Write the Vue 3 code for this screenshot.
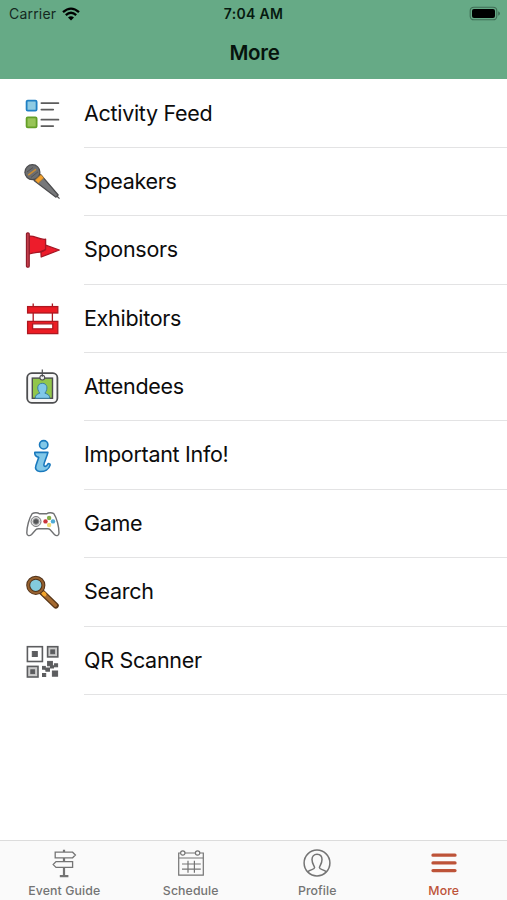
<script setup>
import { ref } from 'vue'

const items = [
  { id: 'feed', label: 'Activity Feed' },
  { id: 'speakers', label: 'Speakers' },
  { id: 'sponsors', label: 'Sponsors' },
  { id: 'exhibitors', label: 'Exhibitors' },
  { id: 'attendees', label: 'Attendees' },
  { id: 'info', label: 'Important Info!' },
  { id: 'game', label: 'Game' },
  { id: 'search', label: 'Search' },
  { id: 'qr', label: 'QR Scanner' }
]

const tabs = [
  { id: 'guide', label: 'Event Guide' },
  { id: 'schedule', label: 'Schedule' },
  { id: 'profile', label: 'Profile' },
  { id: 'more', label: 'More' }
]

const activeTab = ref('more')
</script>

<template>
  <div class="screen">
    <header class="header">
      <div class="status">
        <div class="carrier">
          <span>Carrier</span>
          <svg class="wifi" width="18" height="14" viewBox="0 0 18 14">
            <path d="M1 5.2 Q9-2 17 5.2" />
            <path d="M3.8 8.2 Q9 3.4 14.2 8.2" />
            <path class="dot" d="M6 10.6 Q9 8 12 10.6 L9 13.6Z" />
          </svg>
        </div>
        <span class="time">7:04 AM</span>
        <svg class="battery" width="32" height="15" viewBox="0 0 32 15">
          <rect class="shell" x="1.2" y="1.2" width="26.6" height="12.6" rx="3.6" />
          <rect x="3" y="3" width="23" height="9" rx="2" />
          <path class="cap" d="M29.2 5.2 Q31 6 31 7.5 Q31 9 29.2 9.8Z" />
        </svg>
      </div>
      <h1>More</h1>
    </header>

    <main class="list">
      <a v-for="item in items" :key="item.id" class="row">
        <svg class="icon" width="36" height="36" viewBox="0 0 36 36">
          <g v-if="item.id === 'feed'" stroke-width="1.8">
            <rect x="2.6" y="4.6" width="10" height="10" rx="1.2" fill="#8fcbe3" stroke="#2080c4" />
            <rect x="2.6" y="21.4" width="10" height="10" rx="1.2" fill="#98c457" stroke="#649f28" />
            <path d="M17.4 7.1H34.4M17.4 13.6H29.2M17.4 23.7H34.4M17.4 30.1H29.2" fill="none" stroke="#5c5c5c" stroke-linecap="round" />
          </g>
          <g v-else-if="item.id === 'speakers'" stroke="#4b4b4d" stroke-width="1.2" stroke-linejoin="round">
            <path d="M10 16.5L16.5 10.3L34.2 31L32 33.2Z" fill="#77787a" />
            <path d="M32.6 31.8L35.5 34.6" />
            <circle cx="8.4" cy="8.2" r="7.5" fill="#6d6e70" />
            <path d="M11 16.2L17 10.6L19.8 13.9L14.3 19.2Z" fill="#f3a12f" stroke="#9b7134" stroke-width=".7" />
            <path d="M4.2 11.2L12 5.3" stroke="#c98d36" stroke-width="1.5" />
            <path d="M3 8L9 3.5M7 13.4L14 7.8" stroke-width=".8" />
          </g>
          <g v-else-if="item.id === 'sponsors'" fill="#ed1c2b" stroke="#a51624" stroke-width="1.3" stroke-linejoin="round">
            <path d="M16.9 19.8L21.7 13.2L35.3 18L17.2 25Z" />
            <path d="M5.2 4.2C10 2.8 14.5 8.2 21.6 7.2V17.5C18 21.2 12 19.6 5.2 22Z" />
            <path d="M16.9 19.6L21.5 17.5" />
            <rect x="2.5" y=".8" width="2.7" height="34.4" rx="1.2" fill="#c94452" stroke="#911d2b" />
          </g>
          <g v-else-if="item.id === 'exhibitors'" fill="#ec1c24" stroke="#ad1720" stroke-width="1.3">
            <path d="M9.2 2.5V21M28.4 2.5V21" />
            <rect x="3.6" y="5.6" width="30.2" height="6.4" />
            <path fill-rule="evenodd" d="M3.6 20.4H33.8V32.7H3.6ZM8.6 22.8V27.8H28.8V22.8Z" />
          </g>
          <g v-else-if="item.id === 'attendees'" fill="none" stroke="#4d4e50" stroke-width="1.4">
            <rect x="3.2" y="4.2" width="30.2" height="29.6" rx="4.5" fill="#f8f8f8" stroke-width="1.8" />
            <rect x="8.3" y="9.1" width="20.2" height="20.2" fill="#91c64b" />
            <path d="M11.3 29.3C11.3 25.8 13 25.2 15.8 24.2C12.2 19.5 13.5 14.3 18.3 14.3S24.5 19.5 20.9 24.2C23.7 25.2 25.7 25.8 25.7 29.3Z" fill="#80c8e9" stroke="#397fa2" stroke-width="1" />
            <circle cx="18.3" cy="8.6" r="2.4" fill="#eee" stroke-width="1.1" />
            <path d="M18.3.4V7.8" stroke-width="1.2" />
          </g>
          <g v-else-if="item.id === 'info'" fill="#82c8e8" stroke="#1979bd" stroke-width="1.6" stroke-linejoin="round">
            <circle cx="19.7" cy="6.8" r="4.2" />
            <path d="M10.8 14.4H23.9C23 19.2 20.2 23.3 19.9 26.8C19.8 29.3 22.7 28.6 23.7 26.3C24.3 25.1 26.5 25.6 26.1 27.1C25 31.3 20.7 33.7 15.9 33.5C11.8 33.3 10.9 30.4 12 27.3L14.7 19.4C12.3 18.8 10.4 17.1 10.8 14.4Z" />
          </g>
          <g v-else-if="item.id === 'game'" fill="none">
            <path d="M8.2 7.7C10.4 6.4 14 6.6 15.3 7.8H22.8C24.3 6.5 27.8 6.4 29.8 7.7C32.8 12 35.1 21.2 35 27C34.9 30 32.3 30.4 30.4 28.4L26.2 23.8C25.5 23 24.7 22.8 23.6 22.8H14.4C13.3 22.8 12.5 23 11.8 23.8L7.6 28.4C5.6 30.4 2.9 30 2.8 27C2.7 21.2 5.2 12 8.2 7.7Z" fill="#fff" stroke="#707173" stroke-width="1.4" />
            <circle cx="12" cy="15.5" r="5" fill="#ddd" stroke="#77787a" />
            <circle cx="12" cy="15.5" r="2.8" fill="#555658" stroke="#8a8b8d" />
            <circle cx="25.1" cy="12" r="2.2" fill="#84ad4b" />
            <circle cx="29" cy="15.4" r="2.2" fill="#4eabd5" />
            <circle cx="21.5" cy="15.4" r="2.2" fill="#c9323a" />
            <circle cx="25.1" cy="19" r="2.2" fill="#efdb75" />
          </g>
          <g v-else-if="item.id === 'search'" stroke-linecap="round">
            <path d="M17.8 18.2L31.8 31.6" stroke="#593718" stroke-width="6" />
            <path d="M18.2 18.6L31.4 31.2" stroke="#a56a30" stroke-width="3.4" />
            <path d="M19.6 19.4L20.6 20.5" stroke="#f3a52b" stroke-width="3.8" />
            <circle cx="11.8" cy="11.3" r="7.6" fill="#83cbdc" stroke="#51331b" stroke-width="4" />
            <circle cx="11.8" cy="11.3" r="7.6" fill="none" stroke="#96612f" stroke-width="2" />
          </g>
          <g v-else fill="none" stroke="#5c5d5f" stroke-width="1.6">
            <rect x="3.4" y="3.7" width="15" height="14.8" />
            <rect x="23.6" y="3.7" width="10.2" height="10.2" fill="#ccc" />
            <rect x="3.4" y="23.4" width="10.6" height="10.6" fill="#ccc" />
            <g fill="#5c5d5f" stroke-width="1">
              <rect x="8.3" y="8.5" width="5" height="5" />
              <rect x="26.8" y="6.9" width="3.8" height="3.8" />
              <rect x="6.8" y="26.8" width="3.8" height="3.8" />
              <rect x="18.5" y="23.4" width="2.8" height="2.8" />
              <rect x="23.6" y="18.4" width="4.8" height="4.4" />
              <rect x="30.4" y="20.8" width="3.2" height="3" />
              <rect x="21.9" y="25" width="3.6" height="3.2" />
              <rect x="26.5" y="22.8" width="3" height="2.2" />
              <rect x="18.5" y="30.5" width="3.2" height="3" />
              <rect x="28.4" y="28" width="5.2" height="5.2" />
            </g>
            <path d="M20.8 25.6L23 27" />
          </g>
        </svg>
        <span class="label">{{ item.label }}</span>
      </a>
    </main>

    <nav class="tabs">
      <button
        v-for="tab in tabs"
        :key="tab.id"
        type="button"
        class="tab"
        :class="{ active: activeTab === tab.id }"
        @click="activeTab = tab.id"
      >
        <svg width="30" height="30" viewBox="0 0 30 30" fill="none" stroke="currentColor" stroke-width="1.3">
          <g v-if="tab.id === 'guide'">
            <path d="M6.2 4.2H23.6L26.4 7L23.6 9.8H6.2ZM23.6 13.6H7L4.2 16.6L7 19.4H23.6Z" />
            <path d="M15 1.8V4M15 10V13.4M15 19.6V28M10.8 28.2H19.4" stroke-width="2.2" />
          </g>
          <g v-else-if="tab.id === 'schedule'" stroke-width="1.2">
            <path d="M4.3 5H2.7V27.2H27.3V5H23.8M8.8 5H19.4M2.7 10H27.3M6 16H24.8M6 21.2H24.8M12 12.8V24.8M18.4 12.8V24.8" />
            <circle cx="6.8" cy="5" r="2.2" />
            <circle cx="21.6" cy="5" r="2.2" />
          </g>
          <g v-else-if="tab.id === 'profile'" stroke-width="1.5">
            <circle cx="15" cy="15" r="12.9" />
            <path d="M5.8 23.8C8.2 21.2 12.6 21.8 12.6 19.6C12.6 18.2 10 15.8 10 11.5C10 8.3 12 6.2 15 6.2S20 8.3 20 11.5C20 15.8 17.4 18.2 17.4 19.6C17.4 21.8 21.8 21.2 24.2 23.8" />
          </g>
          <path v-else d="M4 7.2H26M4 14.9H26M4 22.6H26" stroke-width="3.3" stroke-linecap="round" />
        </svg>
        <span>{{ tab.label }}</span>
      </button>
    </nav>
  </div>
</template>

<style>
body {
  margin: 0;
  background: #fff;
}
</style>

<style scoped>
.screen {
  display: flex;
  flex-direction: column;
  width: 507px;
  height: 900px;
  overflow: hidden;
  background: #fff;
  color: #000;
  font-family: Inter, "Liberation Sans", sans-serif;
}
.header {
  height: 79px;
  flex: none;
  background: #66aa86;
}
.status {
  display: grid;
  grid-template-columns: 1fr auto 1fr;
  align-items: center;
  height: 27px;
  padding: 0 6px;
  font-size: 14px;
}
.carrier {
  display: flex;
  align-items: center;
  gap: 6px;
  padding-left: 3px;
  color: #14291f;
  letter-spacing: 0.2px;
}
.wifi {
  fill: none;
  stroke: #000;
  stroke-width: 2.3;
}
.wifi .dot {
  fill: #000;
  stroke: none;
}
.time {
  font-weight: 600;
  color: #071a10;
  letter-spacing: 0.3px;
}
.battery {
  justify-self: end;
}
.battery .shell {
  fill: none;
  stroke: #3f6d55;
  stroke-width: 1.1;
}
.battery .cap {
  fill: #3f6d55;
}
h1 {
  margin: 0;
  height: 51px;
  line-height: 51px;
  padding-left: 2px;
  text-align: center;
  font-size: 20.5px;
  font-weight: 600;
  letter-spacing: -0.3px;
  color: #06140d;
}
.list {
  flex: 1;
  padding-top: 0.5px;
}
.row {
  display: flex;
  align-items: center;
  height: 68.4px;
  padding-left: 24px;
}
.icon {
  flex: none;
  margin-right: 24px;
}
.label {
  flex: 1;
  height: 100%;
  box-sizing: border-box;
  border-bottom: 1px solid #e3e3e4;
  line-height: 67.8px;
  font-size: 21.5px;
  letter-spacing: -0.3px;
  color: #0c0c0c;
}
.tabs {
  display: flex;
  height: 60px;
  flex: none;
  box-sizing: border-box;
  border-top: 1px solid #dcdcdc;
  background: #fafafa;
}
.tab {
  display: flex;
  flex: 1 1 0;
  flex-direction: column;
  align-items: center;
  padding: 7px 0 0;
  border: 0;
  background: none;
  color: #747474;
  font-family: inherit;
  font-size: 12.3px;
  font-weight: 500;
  line-height: 16px;
  letter-spacing: 0.1px;
}
.tab:first-child {
  padding-left: 1px;
}
.tab svg {
  margin-bottom: 5px;
}
.tab.active {
  color: #bd5338;
}
</style>
